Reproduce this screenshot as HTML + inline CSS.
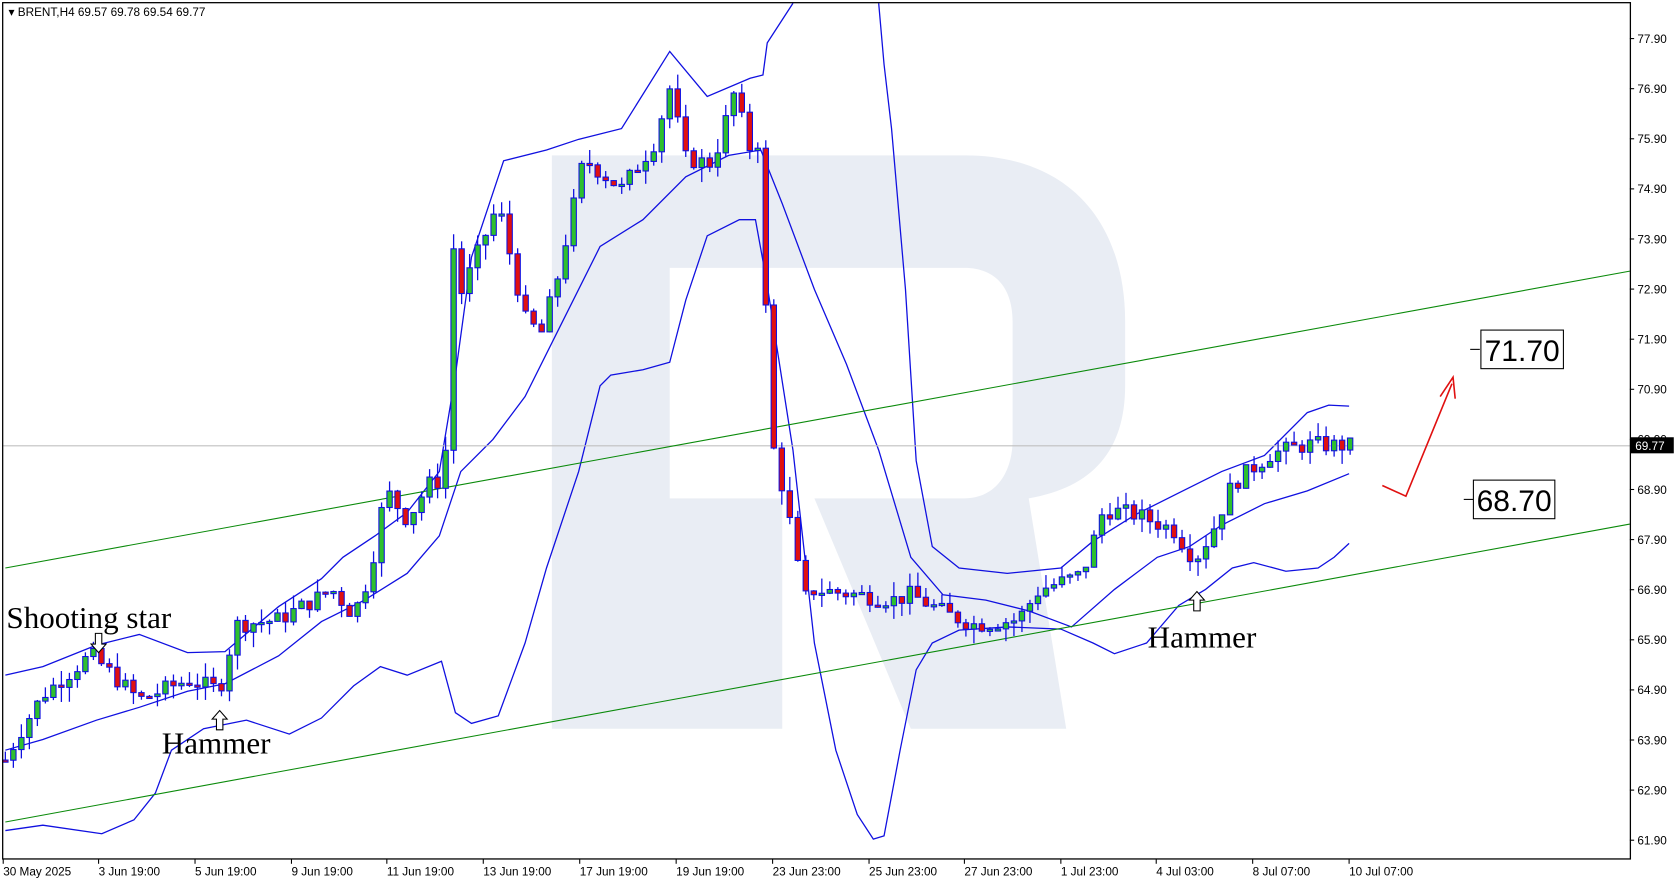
<!DOCTYPE html>
<html><head><meta charset="utf-8"><style>
html,body{margin:0;padding:0;background:#fff;overflow:hidden}
svg{display:block}
text{font-family:"Liberation Sans",sans-serif}
</style></head><body>
<svg id="s" width="1677" height="882" viewBox="0 0 1565 823" preserveAspectRatio="none" xmlns="http://www.w3.org/2000/svg">
<rect x="0" y="0" width="1565" height="823" fill="#fff"/>
<path d="M515 145 L900 145 C1000 145 1050 210 1050 300 L1050 360 C1050 420 1020 455 960 465 L995 680 L850 680 L760 465 L730 465 L730 680 L515 680 Z M625 250 L625 465 L900 465 C930 465 945 440 945 410 L945 300 C945 270 930 250 900 250 Z" fill="#e9edf4" fill-rule="evenodd"/>
<g id="g"></g>
<line x1="3" y1="416" x2="1521" y2="416" stroke="#c0c0c0" stroke-width="1"/>
<line x1="5" y1="530" x2="1521" y2="253" stroke="#0a8a0a" stroke-width="1"/>
<line x1="5" y1="767" x2="1521" y2="489" stroke="#0a8a0a" stroke-width="1"/>
<g id="c"></g>
<rect x="2.5" y="2.5" width="1519" height="799" fill="none" stroke="#000" stroke-width="1.2"/>
<text x="8" y="15" font-size="11">▾ BRENT,H4  69.57 69.78 69.54 69.77</text>
<polyline points="1290,453 1312,463 1355,358" fill="none" stroke="#e01010" stroke-width="1.5"/>
<polyline points="1344,370 1356,352 1358,372" fill="none" stroke="#e01010" stroke-width="1.5"/>
<line x1="1372" y1="326" x2="1381" y2="326" stroke="#000"/>
<rect x="1382" y="308" width="77" height="36" fill="#fff" stroke="#000"/>
<text x="1420.5" y="337" font-size="28" text-anchor="middle">71.70</text>
<line x1="1366" y1="466" x2="1375" y2="466" stroke="#000"/>
<rect x="1375" y="448" width="76" height="36" fill="#fff" stroke="#000"/>
<text x="1413" y="477" font-size="28" text-anchor="middle">68.70</text>
<text x="6" y="586" font-size="29" style="font-family:'Liberation Serif',serif">Shooting star</text>
<text x="151" y="703" font-size="29" style="font-family:'Liberation Serif',serif">Hammer</text>
<text x="1071" y="604" font-size="29" style="font-family:'Liberation Serif',serif">Hammer</text>
<path d="M89 591 L95 591 L95 601 L99 601 L92 609 L85 601 L89 601 Z" fill="#fff" stroke="#000"/>
<path d="M202 681 L208 681 L208 671 L212 671 L205 663 L198 671 L202 671 Z" fill="#fff" stroke="#000"/>
<path d="M1114 570 L1120 570 L1120 560 L1124 560 L1117 552 L1110 560 L1114 560 Z" fill="#fff" stroke="#000"/>
<g id="ax" font-size="11"></g>
<rect x="1522" y="408" width="40" height="15" fill="#000"/>
<text x="1526" y="420" font-size="11" fill="#fff">69.77</text>
</svg>
<script>
var NS="http://www.w3.org/2000/svg";
function el(p,t,a,txt){var e=document.createElementNS(NS,t);for(var k in a)e.setAttribute(k,a[k]);if(txt)e.textContent=txt;p.appendChild(e);return e;}
function Y(p){return 36+(77.9-p)*46.75;}
var g=document.getElementById('g'),c=document.getElementById('c'),ax=document.getElementById('ax');
function pl(pts){el(g,'polyline',{points:pts.map(function(q){return q.join(',')}).join(' '),fill:'none',stroke:'#1010e0','stroke-width':1.2});}
pl([[5,630],[40,622],[90,602],[130,592],[175,609],[210,608],[260,566],[300,540],[320,520],[350,500],[380,478],[410,440],[425,350],[440,240],[470,150],[510,140],[540,130],[580,120],[625,48],[660,90],[700,73],[712,70],[716,40],[740,3]]);
pl([[820,3],[825,60],[832,120],[845,270],[855,430],[870,510],[895,530],[940,535],[990,530],[1020,505],[1060,480],[1100,460],[1140,440],[1180,425],[1220,385],[1240,378],[1259,379]]);
pl([[5,700],[40,690],[90,672],[130,660],[175,645],[210,638],[260,612],[300,580],[340,560],[380,535],[410,500],[430,440],[460,410],[490,370],[520,310],[560,230],[600,205],[640,165],[680,145],[710,140],[730,190],[760,270],[790,340],[820,420],[850,520],[880,555],[920,560],[960,570],[1000,585],[1040,550],[1080,520],[1110,510],[1140,490],[1180,470],[1220,458],[1259,442]]);
pl([[5,775],[40,770],[95,778],[125,765],[145,740],[160,700],[190,680],[230,672],[270,685],[300,670],[330,640],[355,622],[380,630],[412,617],[425,665],[440,675],[465,668],[490,600],[510,530],[540,440],[560,360],[570,350],[600,345],[625,338],[640,280],[660,220],[690,205],[705,205],[715,260],[740,420],[760,600],[780,700],[800,760],[815,783],[825,780],[840,700],[855,625],[870,600],[895,588],[940,585],[990,587],[1020,600],[1040,610],[1070,600],[1100,565],[1125,550],[1150,530],[1170,525],[1200,533],[1230,530],[1245,520],[1259,507]]);
var W=[[5,63.5],[20,64.1],[40,64.8],[85,65.6],[130,64.7],[175,65.1],[205,64.9],[220,66.2],[260,66.3],[310,66.9],[330,66.4],[345,67.2],[360,68.9],[380,68.3],[400,69.0],[415,69.1],[422,73.9],[430,72.8],[465,74.6],[490,72.3],[505,72.0],[520,73.1],[545,75.5],[580,74.9],[610,75.8],[625,76.9],[640,75.5],[665,75.4],[685,76.8],[700,75.7],[710,75.9],[714,73.7],[716,70.0],[722,69.7],[735,68.5],[750,66.7],[760,66.9],[800,66.8],[835,66.7],[850,66.8],[885,66.4],[910,66.2],[950,66.3],[970,66.9],[1010,67.2],[1030,68.5],[1060,68.4],[1095,68.1],[1115,67.5],[1130,68.0],[1150,69.0],[1185,69.6],[1220,69.8],[1259,69.77]];
function interp(x){for(var i=0;i<W.length-1;i++){if(x<=W[i+1][0]){var t=(x-W[i][0])/(W[i+1][0]-W[i][0]);return W[i][1]+t*(W[i+1][1]-W[i][1]);}}return W[W.length-1][1];}
var seed=7;function r(){seed=(seed*9301+49297)%233280;return seed/233280;}
var prev=interp(5);
for(var x=5;x<=1260;x+=7.47){
 var cl=interp(x)+(r()-0.5)*0.35;var op=prev;
 var hi=Math.max(op,cl)+r()*0.3,lo=Math.min(op,cl)-r()*0.3;
 el(c,'line',{x1:x,x2:x,y1:Y(hi),y2:Y(lo),stroke:'#1010e0','stroke-width':1.2});
 var t=Y(Math.max(op,cl)),b=Y(Math.min(op,cl));if(b-t<2){b=t+2;}
 el(c,'rect',{x:x-2.5,y:t,width:5,height:b-t,fill:cl>=op?'#2ec02e':'#e01010',stroke:'#1010e0','stroke-width':1});
 prev=cl;
}
for(var i=0;i<=16;i++){var p=77.9-i,y=Y(p);el(ax,'line',{x1:1521,x2:1525,y1:y,y2:y,stroke:'#000'});el(ax,'text',{x:1528,y:y+4},p.toFixed(2));}
var D=[[3,"30 May 2025"],[92,"3 Jun 19:00"],[182,"5 Jun 19:00"],[272,"9 Jun 19:00"],[361,"11 Jun 19:00"],[451,"13 Jun 19:00"],[541,"17 Jun 19:00"],[631,"19 Jun 19:00"],[721,"23 Jun 23:00"],[811,"25 Jun 23:00"],[900,"27 Jun 23:00"],[990,"1 Jul 23:00"],[1079,"4 Jul 03:00"],[1169,"8 Jul 07:00"],[1259,"10 Jul 07:00"]];
D.forEach(function(d){el(ax,'line',{x1:d[0],x2:d[0],y1:802,y2:806,stroke:'#000'});el(ax,'text',{x:d[0],y:817},d[1]);});
</script>
</body></html>
